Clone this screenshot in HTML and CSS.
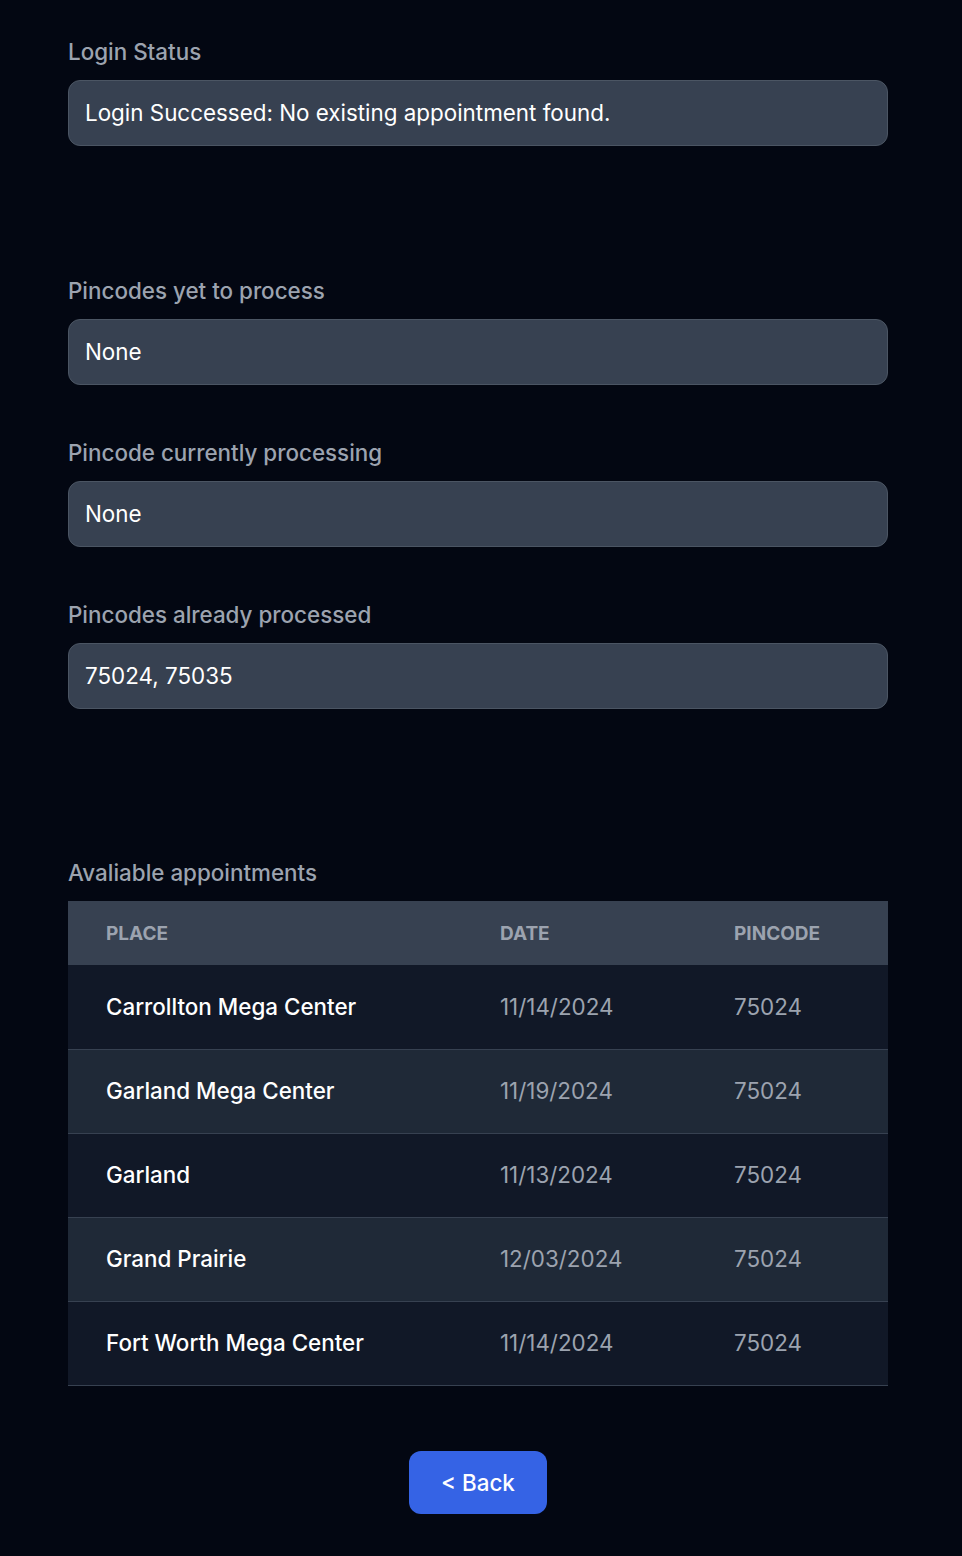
FILE: index.html
```html
<!DOCTYPE html>
<html lang="en">
<head>
<meta charset="utf-8">
<title>Appointments</title>
<link rel="stylesheet" href="styles.css">
</head>
<body>
<main class="page">
  <section class="field">
    <div class="label">Login Status</div>
    <div class="box">Login Successed: No existing appointment found.</div>
  </section>

  <section class="field field-gap-lg">
    <div class="label">Pincodes yet to process</div>
    <div class="box">None</div>
  </section>

  <section class="field field-gap">
    <div class="label">Pincode currently processing</div>
    <div class="box">None</div>
  </section>

  <section class="field field-gap">
    <div class="label">Pincodes already processed</div>
    <div class="box">75024, 75035</div>
  </section>

  <section class="field field-gap-xl">
    <div class="label">Avaliable appointments</div>
    <table class="appts">
      <colgroup>
        <col class="c-place">
        <col class="c-date">
        <col class="c-pin">
      </colgroup>
      <thead>
        <tr><th>Place</th><th>Date</th><th>Pincode</th></tr>
      </thead>
      <tbody>
        <tr class="odd"><td class="place">Carrollton Mega Center</td><td>11/14/2024</td><td>75024</td></tr>
        <tr class="even"><td class="place">Garland Mega Center</td><td>11/19/2024</td><td>75024</td></tr>
        <tr class="odd"><td class="place">Garland</td><td>11/13/2024</td><td>75024</td></tr>
        <tr class="even"><td class="place">Grand Prairie</td><td>12/03/2024</td><td>75024</td></tr>
        <tr class="odd"><td class="place">Fort Worth Mega Center</td><td>11/14/2024</td><td>75024</td></tr>
      </tbody>
    </table>
  </section>

  <div class="actions">
    <button class="back" type="button">&lt; Back</button>
  </div>
</main>
</body>
</html>
```

FILE: styles.css
```css
html, body {
  margin: 0;
  padding: 0;
  background: #030712;
}

body {
  font-family: Inter, "Noto Sans", "Liberation Sans", sans-serif;
  color: #ffffff;
}

.page {
  width: 820px;
  padding: 36px 0 43px 68px;
  display: flex;
  flex-direction: column;
}

.field-gap-lg { margin-top: 129px; }
.field-gap { margin-top: 52px; }
.field-gap-xl { margin-top: 148px; }

.label {
  font-size: 22.4px;
  line-height: 31px;
  font-weight: 500;
  color: #9ca3af;
  margin-bottom: 13px;
}

.box {
  box-sizing: border-box;
  height: 66px;
  padding: 16px 16px;
  font-size: 22.4px;
  line-height: 32px;
  color: #ffffff;
  background: #374151;
  border: 1px solid #4b5563;
  border-radius: 12px;
}

.appts {
  width: 820px;
  border-collapse: collapse;
  table-layout: fixed;
  font-size: 22.4px;
}

.c-place { width: 394px; }
.c-date { width: 234px; }
.c-pin { width: 192px; }

.appts thead tr {
  background: #374151;
}

.appts th {
  height: 64px;
  padding: 0 0 0 38px;
  text-align: left;
  font-size: 19px;
  font-weight: 700;
  text-transform: uppercase;
  color: #9ca3af;
  box-sizing: border-box;
}

.appts td {
  height: 84px;
  padding: 0 0 0 38px;
  color: #9ca3af;
  border-bottom: 1px solid #374151;
  box-sizing: border-box;
  line-height: 32px;
}

.appts td.place {
  color: #ffffff;
  font-weight: 500;
}

.odd { background: #111827; }
.even { background: #1f2937; }

.actions {
  display: flex;
  justify-content: center;
  margin-top: 65px;
}

.back {
  width: 138px;
  height: 63px;
  border: none;
  border-radius: 12px;
  background: #3563e5;
  color: #ffffff;
  font-family: Inter, "Noto Sans", "Liberation Sans", sans-serif;
  font-size: 22.4px;
  font-weight: 500;
  padding: 0;
  cursor: pointer;
}
```
